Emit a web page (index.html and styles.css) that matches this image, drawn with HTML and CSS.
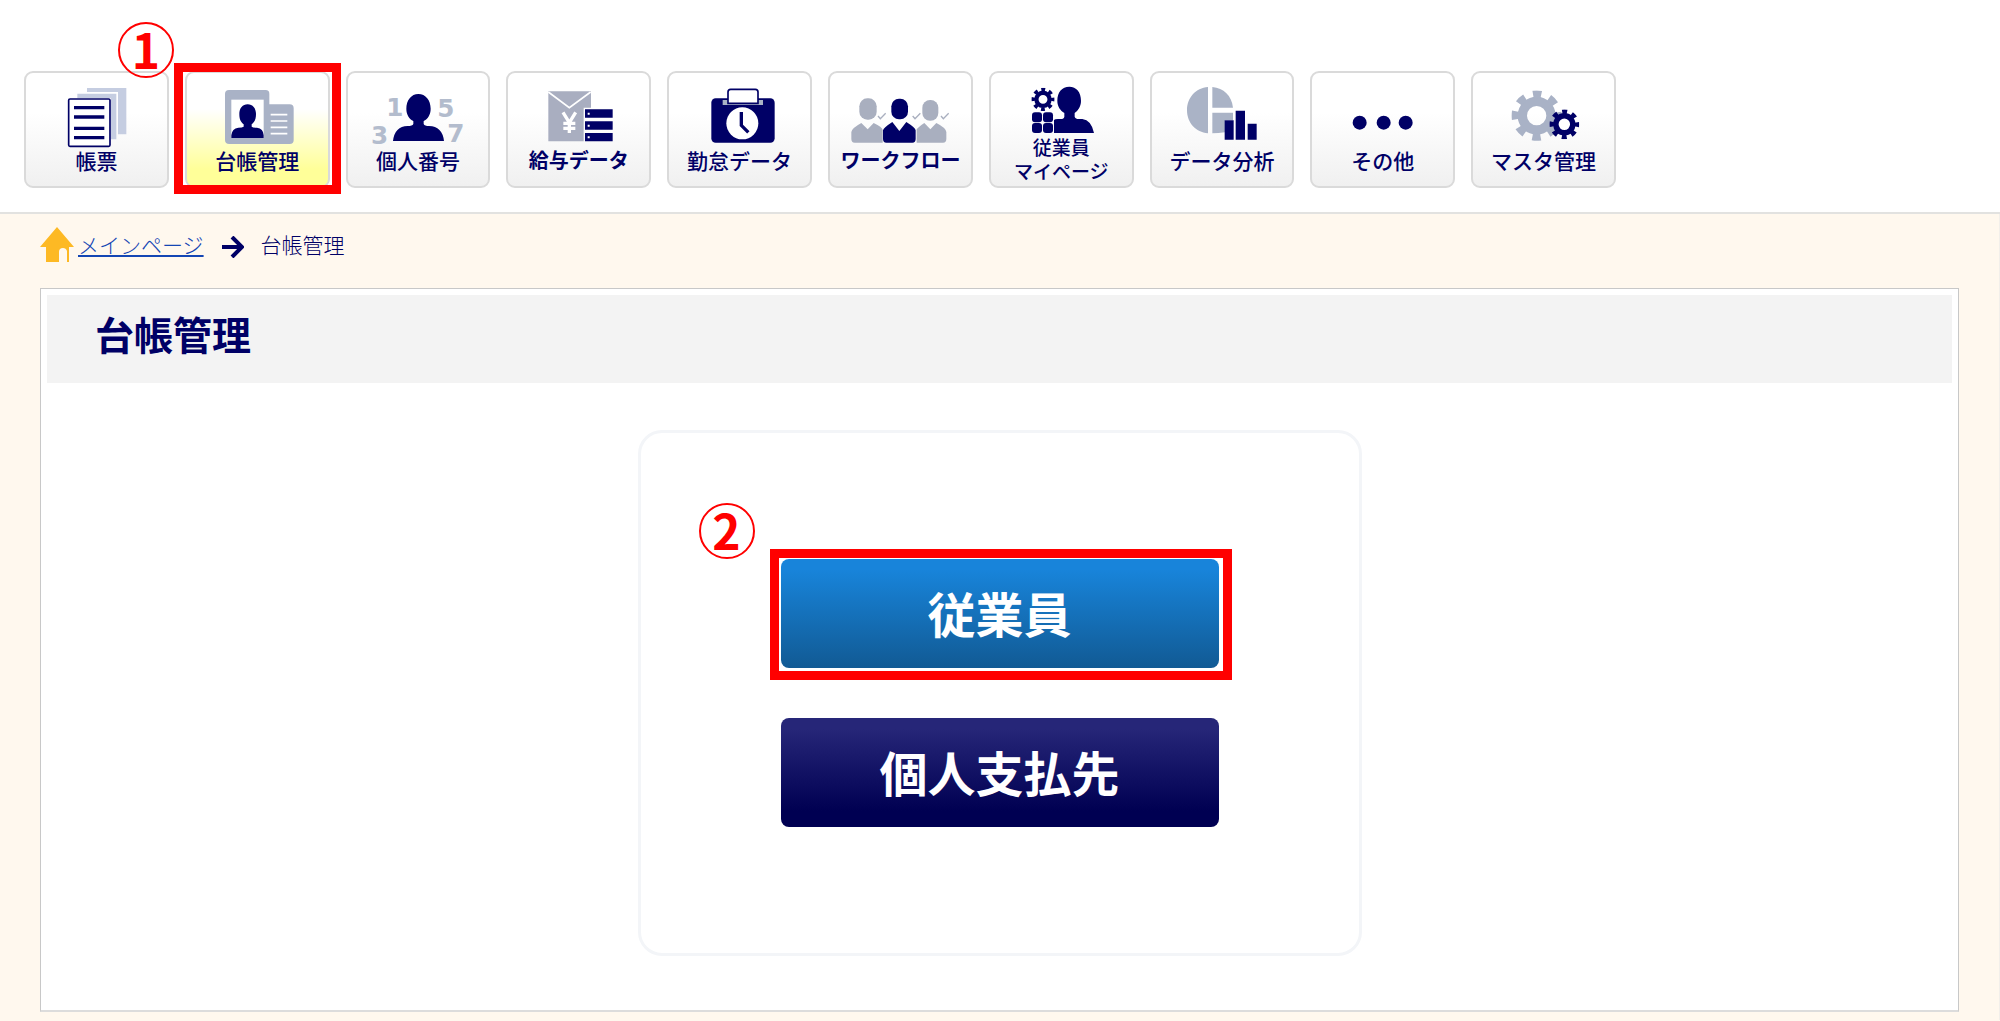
FILE: index.html
```html
<!DOCTYPE html>
<html lang="ja">
<head>
<meta charset="utf-8">
<meta name="viewport" content="width=device-width, initial-scale=1">
<title>台帳管理</title>
<link rel="stylesheet" href="styles.css">
</head>
<body>
<svg class="defs" width="0" height="0" aria-hidden="true">
  <symbol id="gear" viewBox="-76 -76 152 152">
    <circle r="43" fill="none" stroke="currentColor" stroke-width="28"/>
    <circle r="64" fill="none" stroke="currentColor" stroke-width="23" pathLength="80" stroke-dasharray="5 5" stroke-dashoffset="2.5"/>
  </symbol>
</svg>

<header class="header">
  <nav aria-label="メインメニュー">
    <ul class="menu">
      <li class="menu-item">
        <button class="tile" type="button">
          <svg class="icon" viewBox="79 189 420 225" aria-hidden="true">
            <path fill="#c5cde1" d="M262 234H380V373H355V246H262Z"/>
            <path fill="#c5cde1" d="M233 251H350V388H334V264H233Z"/>
            <rect x="207" y="267" width="124" height="142" rx="4" fill="#fff" stroke="#006" stroke-width="5"/>
            <path stroke="#006" stroke-width="10" d="M223 293H314M223 321H314M223 355H314M223 383H314"/>
          </svg>
          <span class="label">帳票</span>
        </button>
      </li>
      <li class="menu-item">
        <button class="tile tile-current" type="button" aria-current="page">
          <svg class="icon" viewBox="560 189 420 225" aria-hidden="true">
            <path fill="#a9b2c6" d="M686 240H796Q807 240 807 251V283H868Q880 283 880 295V391Q880 402 868 402H687Q674 402 674 390V252Q674 240 686 240Z"/>
            <rect x="693" y="269" width="97" height="115" fill="#fff"/>
            <path fill="#006" d="M742 283C757 283 767 295 767 312C767 329 762 336 754 343V350Q757 353 770 353Q789 355 790 376V384H693V376Q695 355 714 353Q726 353 730 350V343C722 336 717 329 717 312C717 295 727 283 742 283Z"/>
            <path stroke="#fff" stroke-width="5" d="M811 314H861M811 333H861M811 352H861M811 371H861"/>
          </svg>
          <span class="label">台帳管理</span>
        </button>
        <span class="frame frame-menu"></span>
        <span class="step step-menu">1</span>
      </li>
      <li class="menu-item">
        <button class="tile" type="button">
          <svg class="icon" viewBox="39 39 420 225" aria-hidden="true">
            <path fill="#006" d="M250 102C272 102 287 121 287 146C287 164 278 177 266 183V192Q269 198 282 198Q322 199 327 243H174Q179 199 218 198Q232 198 235 192V183C223 177 214 164 214 146C214 121 229 102 250 102Z"/>
            <g class="icon-digits">
              <text x="154" y="167">1</text><text x="307" y="172">5</text>
              <text x="108" y="252">3</text><text x="337" y="247">7</text>
            </g>
          </svg>
          <span class="label">個人番号</span>
        </button>
      </li>
      <li class="menu-item">
        <button class="tile" type="button">
          <svg class="icon" viewBox="521 39 420 225" aria-hidden="true">
            <path fill="#a9aec0" d="M639 94H767V143H745V244H639Z"/>
            <path fill="none" stroke="#fff" stroke-width="5" d="M639 96L702 143L766 96"/>
            <path fill="none" stroke="#fff" stroke-width="10" d="M683 157L702 188L721 157M702 186V219M684 190H720M684 205H720"/>
            <path fill="#006" d="M749 148H832V173H749ZM749 184H832V209H749ZM749 219H832V244H749Z"/>
            <path fill="#fff" d="M757 158h6v6h-6ZM757 194h6v6h-6ZM757 229h6v6h-6Z"/>
          </svg>
          <span class="label label-bold">給与データ</span>
        </button>
      </li>
      <li class="menu-item">
        <button class="tile" type="button">
          <svg class="icon" viewBox="44 39 420 225" aria-hidden="true">
            <rect x="168" y="115" width="190" height="133" rx="13" fill="#006"/>
            <rect x="202" y="120" width="121" height="15" fill="#a9b2c6"/>
            <path fill="#fff" stroke="#006" stroke-width="5" d="M218 130V96Q218 88 226 88H300Q308 88 308 96V130Z"/>
            <circle cx="261" cy="190" r="48" fill="#fff"/>
            <path fill="none" stroke="#006" stroke-width="10" d="M258 156V196L279 217"/>
          </svg>
          <span class="label">勤怠データ</span>
        </button>
      </li>
      <li class="menu-item">
        <button class="tile" type="button">
          <svg class="icon" viewBox="526 39 420 225" aria-hidden="true">
            <g fill="#a9afbf">
              <rect x="614" y="115" width="52" height="64" rx="24"/>
              <path d="M590 237V216Q592 204 620 189L639 208L657 189Q683 201 684 210V248H600Q590 248 590 237Z"/>
              <rect x="803" y="120" width="48" height="62" rx="23"/>
              <path d="M786 248V208Q792 200 809 189L827 208L845 189Q873 203 875 216V237Q875 248 865 248Z"/>
            </g>
            <g fill="#006">
              <rect x="710" y="116" width="50" height="62" rx="23"/>
              <path d="M685 237V211Q687 203 713 186L734 213L755 186Q782 203 783 211V237Q783 248 773 248H695Q685 248 685 237Z"/>
            </g>
            <path fill="none" stroke="#a9afbf" stroke-width="4" d="M670 168L677 176L693 160M774 168L781 176L797 160M859 168L866 176L882 160"/>
          </svg>
          <span class="label label-bold">ワークフロー</span>
        </button>
      </li>
      <li class="menu-item">
        <button class="tile" type="button">
          <svg class="icon icon-short" viewBox="49 39 420 186" aria-hidden="true">
            <use href="#gear" x="170" y="83" width="70" height="70" color="#006"/>
            <g fill="#006">
              <rect x="172" y="157" width="30" height="30" rx="9"/><rect x="205" y="157" width="30" height="30" rx="9"/>
              <rect x="172" y="189" width="30" height="30" rx="9"/><rect x="205" y="189" width="30" height="30" rx="9"/>
              <path d="M284 80C305 80 319 96 319 122C319 140 310 151 300 159V170Q302 177 313 177H323Q350 180 358 219H238V180Q240 177 250 177H258Q268 177 269 170V159C257 151 248 140 248 122C248 96 262 80 284 80Z"/>
            </g>
          </svg>
          <span class="label label-two">従業員<br>マイページ</span>
        </button>
      </li>
      <li class="menu-item">
        <button class="tile" type="button">
          <svg class="icon" viewBox="531 39 420 225" aria-hidden="true">
            <path fill="#aab3c6" d="M699 81V220C662 217 636 188 636 151C636 113 662 84 699 81ZM712 81C746 84 770 107 774 143H712ZM712 158H774V180H750V217Q730 220 712 220Z"/>
            <path fill="#006" d="M749 181H776V239H749ZM782 152H810V239H782ZM818 191H845V239H818Z"/>
          </svg>
          <span class="label">データ分析</span>
        </button>
      </li>
      <li class="menu-item">
        <button class="tile" type="button">
          <svg class="icon" viewBox="53 39 420 225" aria-hidden="true">
            <g fill="#006"><circle cx="193" cy="188" r="21"/><circle cx="265" cy="188" r="21"/><circle cx="331" cy="188" r="21"/></g>
          </svg>
          <span class="label">その他</span>
        </button>
      </li>
      <li class="menu-item">
        <button class="tile" type="button">
          <svg class="icon" viewBox="536 39 420 225" aria-hidden="true">
            <use href="#gear" x="648" y="91" width="152" height="152" color="#a9b2c6"/>
            <circle cx="807" cy="193" r="22" fill="#fff"/>
            <use href="#gear" x="762" y="148" width="90" height="90" color="#006"/>
          </svg>
          <span class="label">マスタ管理</span>
        </button>
      </li>
    </ul>
  </nav>
</header>

<main class="main">
  <nav class="breadcrumb" aria-label="パンくずリスト">
    <svg class="home" viewBox="0 0 34 35" aria-hidden="true">
      <path fill="#fdb924" d="M17 0L34 20H29V35H27V24Q26 21 23 21Q19 21 19 25V35H6V20H0Z"/>
    </svg>
    <a class="crumb-link" href="#">メインページ</a>
    <svg class="arrow" viewBox="0 0 22 22" aria-hidden="true">
      <path fill="none" stroke="#006" stroke-width="4" d="M0 11H19M10 1L20 11L10 21"/>
    </svg>
    <span class="crumb">台帳管理</span>
  </nav>

  <section class="panel">
    <h1 class="title">台帳管理</h1>
    <div class="card">
      <div class="choice">
        <button class="action action-blue" type="button">従業員</button>
        <span class="frame frame-choice"></span>
        <span class="step step-choice">2</span>
      </div>
      <div class="choice">
        <button class="action action-navy" type="button">個人支払先</button>
      </div>
    </div>
  </section>
</main>
</body>
</html>
```

FILE: styles.css
```css
* {
  box-sizing: border-box;
}

body {
  margin: 0;
  background: #fff8ee;
  color: #006;
  font-family: "Noto Sans CJK JP", "Noto Sans", sans-serif;
}

.defs {
  position: absolute;
}

/* Header menu */
.header {
  padding: 71px 24px 24px;
  background: #fff;
  border-bottom: 2px solid #e2e2e0;
}

.menu {
  display: grid;
  grid-template-columns: repeat(10, 1fr);
  gap: 16px;
  max-width: 1592px;
  margin: 0;
  padding: 0;
  list-style: none;
}

.menu-item {
  position: relative;
}

.tile {
  display: flex;
  flex-direction: column;
  align-items: center;
  width: 100%;
  height: 117px;
  padding: 0;
  border: 2px solid #dadada;
  border-radius: 9px;
  background: linear-gradient(#fff 35%, #f0f0f0);
  color: #006;
  font-family: inherit;
  cursor: pointer;
}

.tile-current {
  background: linear-gradient(#fff 32%, #ff9 85%);
}

.icon {
  flex: none;
  width: 140px;
  height: 75px;
  overflow: visible;
}

.icon-short {
  height: 62px;
}

.icon-digits {
  fill: #b3bccd;
  font: bold 74px "DejaVu Sans", sans-serif;
}

.label {
  font-size: 21px;
  font-weight: 500;
  line-height: 24px;
  white-space: nowrap;
}

.label-bold {
  font-size: 20px;
  font-weight: 700;
}

.label-two {
  font-size: 19px;
}

/* Step marks laid over the controls */
.frame {
  position: absolute;
  border: 9px solid #f00;
  pointer-events: none;
}

.frame-menu {
  inset: -8px -11px -6px;
}

.frame-choice {
  inset: -10px -13px -12px -11px;
}

.step {
  position: absolute;
  display: flex;
  align-items: center;
  justify-content: center;
  width: 56px;
  height: 56px;
  padding-bottom: 4px;
  border: 2px solid #f00;
  border-radius: 50%;
  color: #f00;
  font-size: 48px;
  font-weight: 700;
  line-height: 48px;
  pointer-events: none;
}

.step-menu {
  top: -49px;
  left: -67px;
}

.step-choice {
  top: -56px;
  left: -82px;
}

/* Page body */
.main {
  padding: 0 40px 8px;
  border-right: 1px solid #f2efea;
}

.breadcrumb {
  display: flex;
  align-items: center;
  height: 74px;
  padding-bottom: 14px;
  font-size: 21px;
  font-weight: 300;
  line-height: 32px;
}

.home {
  width: 34px;
  height: 35px;
  margin-right: 4px;
}

.crumb-link {
  color: #1446b4;
  text-decoration-thickness: 2px;
  text-underline-offset: 2px;
}

.arrow {
  width: 22px;
  height: 22px;
  margin: 6px 17px 0 18px;
}

.panel {
  padding: 6px 6px 54px;
  border: 1px solid #c8c8c8;
  border-bottom: 2px solid #dcdcdc;
  background: #fff;
}

.title {
  margin: 0 0 47px;
  padding: 10px 48px 22px;
  background: #f3f3f3;
  font-size: 39px;
  font-weight: 700;
  line-height: 56px;
}

.card {
  display: flex;
  flex-direction: column;
  align-items: center;
  gap: 50px;
  max-width: 724px;
  margin: 0 auto;
  padding: 126px 24px;
  border: 3px solid #f3f5f8;
  border-radius: 24px;
}

.choice {
  position: relative;
  width: 100%;
  max-width: 438px;
}

.action {
  display: block;
  width: 100%;
  padding: 17px 0 20px;
  border: 0;
  border-radius: 8px;
  color: #fff;
  font-family: inherit;
  font-size: 48px;
  font-weight: 700;
  line-height: 72px;
  cursor: pointer;
}

.action-blue {
  background: linear-gradient(#1884da 10%, #115a94);
}

.action-navy {
  background: linear-gradient(#262678 10%, #000052 85%);
}
```
